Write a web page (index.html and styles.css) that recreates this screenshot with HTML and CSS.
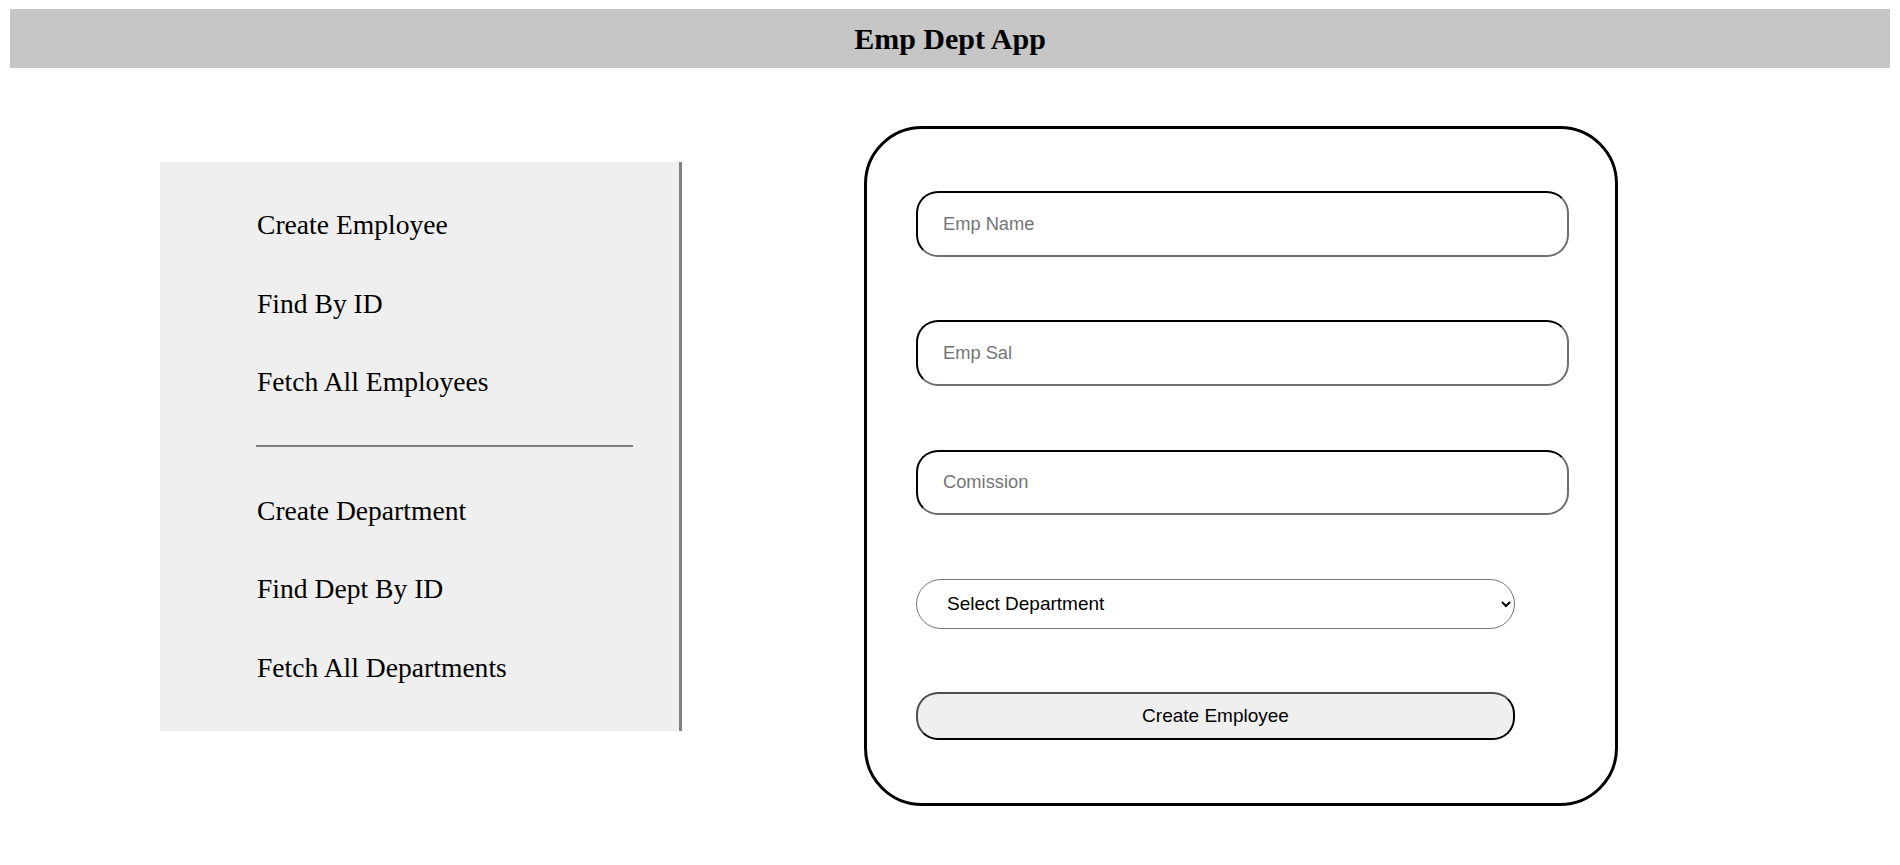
FILE: index.html
```html
<!DOCTYPE html>
<html lang="en">
<head>
<meta charset="utf-8">
<title>Emp Dept App</title>
<link rel="stylesheet" href="styles.css">
</head>
<body>
<header class="app-header">
  <h1 class="app-title">Emp Dept App</h1>
</header>
<main class="app-main">
  <nav class="sidebar">
    <a class="nav-link" href="#">Create Employee</a>
    <a class="nav-link" href="#">Find By ID</a>
    <a class="nav-link" href="#">Fetch All Employees</a>
    <hr class="nav-divider">
    <a class="nav-link" href="#">Create Department</a>
    <a class="nav-link" href="#">Find Dept By ID</a>
    <a class="nav-link" href="#">Fetch All Departments</a>
  </nav>
  <form class="emp-form">
    <input class="field" type="text" placeholder="Emp Name">
    <input class="field" type="text" placeholder="Emp Sal">
    <input class="field" type="text" placeholder="Comission">
    <select class="dept-select">
      <option>Select Department</option>
    </select>
    <button class="submit-btn" type="button">Create Employee</button>
  </form>
</main>
</body>
</html>
```
FILE: styles.css
```css
* { box-sizing: border-box; }

body {
  margin: 0;
  padding: 9px 10px 0;
  background: #fff;
  font-family: "Liberation Serif", "Times New Roman", serif;
  color: #000;
}

.app-header {
  height: 59px;
  background: #c6c6c6;
  display: flex;
  align-items: center;
  justify-content: center;
}

.app-title {
  margin: 0;
  font-size: 30px;
  font-weight: bold;
  line-height: 59px;
}

.app-main {
  display: flex;
  align-items: flex-start;
  padding-left: 150px;
}

.sidebar {
  margin-top: 94px;
  width: 522px;
  background: #efefef;
  border-right: 3px solid #808080;
  padding: 47px 46px 48px 97px;
  display: flex;
  flex-direction: column;
  gap: 47.7px;
}

.nav-link {
  font-size: 27.6px;
  line-height: 31px;
  height: 31px;
  color: #000;
  text-decoration: none;
  white-space: nowrap;
}

.nav-divider {
  margin: 0 0 0 -1px;
  height: 2px;
  border: 0;
  background: #808080;
}

.emp-form {
  margin-top: 58px;
  margin-left: 182px;
  width: 754px;
  height: 680px;
  border: 3px solid #000;
  border-radius: 58px;
  padding: 62px 49px 63px;
  display: flex;
  flex-direction: column;
  align-items: flex-start;
  gap: 63.3px;
}

.field {
  width: 653px;
  height: 66px;
  border-style: solid;
  border-width: 2px;
  border-color: #000 #6f6f6f #6f6f6f #000;
  border-radius: 22px;
  padding: 0 25px;
  font-family: "Liberation Sans", Arial, sans-serif;
  font-size: 18.3px;
  color: #000;
  background: #fff;
  outline: none;
}

.field::placeholder {
  color: #757575;
}

.dept-select {
  width: 599px;
  height: 50px;
  border: 1px solid #767676;
  border-radius: 25px;
  padding: 0 8px 0 26px;
  font-family: "Liberation Sans", Arial, sans-serif;
  font-size: 19px;
  color: #000;
  background: #fff;
}

.submit-btn {
  width: 599px;
  height: 48px;
  border-style: solid;
  border-width: 2px;
  border-color: #4d4d4d #000 #000 #4d4d4d;
  border-radius: 22px;
  background: #efefef;
  font-family: "Liberation Sans", Arial, sans-serif;
  font-size: 19px;
  color: #000;
}
```
